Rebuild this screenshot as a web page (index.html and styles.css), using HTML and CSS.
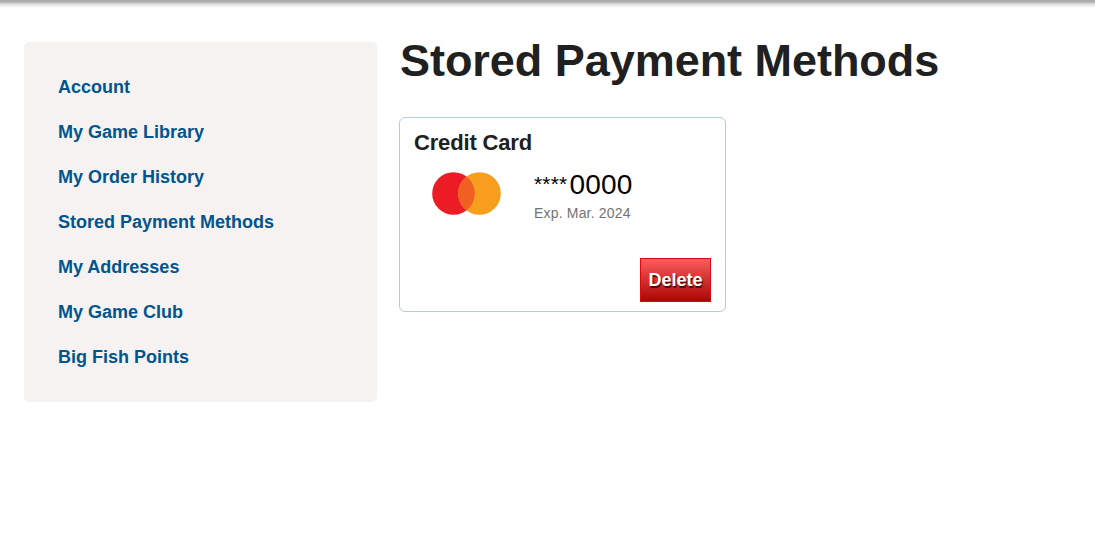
FILE: index.html
```html
<!DOCTYPE html>
<html lang="en">
<head>
    <meta charset="UTF-8">
    <meta name="viewport" content="width=device-width, initial-scale=1.0">
    <title>Stored Payment Methods</title>
    <link rel="stylesheet" href="styles.css">
</head>
<body>
    <div class="top-shadow"></div>
    <div class="container">
        <nav class="sidebar">
            <a href="#">Account</a>
            <a href="#">My Game Library</a>
            <a href="#">My Order History</a>
            <a href="#">Stored Payment Methods</a>
            <a href="#">My Addresses</a>
            <a href="#">My Game Club</a>
            <a href="#">Big Fish Points</a>
        </nav>

        <main class="content">
            <h1>Stored Payment Methods</h1>
            <section class="card">
                <h2>Credit Card</h2>
                <div class="card-details">
                    <svg class="card-logo" width="70" height="44" viewBox="0 0 70 44">
                        <circle cx="21.5" cy="22.5" r="21.3" fill="#eb1c26"/>
                        <circle cx="47.5" cy="22.5" r="21.3" fill="#f79e1f"/>
                        <path d="M34.5 5.6a21.3 21.3 0 0 1 0 33.8a21.3 21.3 0 0 1 0-33.8z" fill="#f16022"/>
                    </svg>
                    <div class="card-info">
                        <div class="card-number"><span class="mask">****</span><span class="digits">0000</span></div>
                        <div class="card-exp">Exp. Mar. 2024</div>
                    </div>
                </div>
                <button type="button" class="delete">Delete</button>
            </section>
        </main>
    </div>
</body>
</html>
```
FILE: styles.css
```css
* {
    margin: 0;
    padding: 0;
    box-sizing: border-box;
}

body {
    background: #fff;
    color: #202020;
    font-family: "Liberation Sans", Arial, sans-serif;
}

.top-shadow {
    height: 8px;
    background: linear-gradient(to bottom, #a8a8a8 0, #b0b0b0 2px, #dcdcdc 4px, #fff 8px);
}

.container {
    display: flex;
    align-items: flex-start;
    gap: 22px;
    padding: 34px 24px 0;
}

.sidebar {
    display: flex;
    flex-direction: column;
    width: 353px;
    height: 360px;
    padding: 23px 34px;
    border-radius: 5px;
    background: #f6f2f2;
}

.sidebar a {
    color: #00558f;
    font-size: 18px;
    font-weight: bold;
    line-height: 45px;
    text-decoration: none;
}

h1 {
    margin-top: -7px;
    padding-left: 1px;
    font-size: 45px;
    line-height: 52px;
    letter-spacing: -0.04px;
    white-space: nowrap;
}

.card {
    display: flex;
    flex-direction: column;
    width: 327px;
    height: 195px;
    margin-top: 30px;
    padding: 12px 14px 9px;
    border: 1px solid #b0cdd8;
    border-radius: 6px;
}

h2 {
    font-size: 22px;
    line-height: 26px;
    letter-spacing: -0.17px;
}

.card-details {
    display: flex;
    gap: 32px;
    padding: 15px 0 0 18px;
}

.card-number {
    display: flex;
    align-items: flex-start;
    gap: 2px;
    height: 34px;
    margin-top: -2px;
    color: #000;
    line-height: 31px;
}

.mask {
    font-size: 21px;
    line-height: 29px;
    letter-spacing: 0.2px;
}

.digits {
    font-size: 28px;
    letter-spacing: 0.2px;
}

.card-exp {
    color: #737373;
    font-size: 14px;
    line-height: 20px;
    letter-spacing: 0.18px;
}

.delete {
    align-self: flex-end;
    width: 71px;
    height: 44px;
    margin-top: auto;
    border: 1px solid #d80a0a;
    background: linear-gradient(to bottom, #fb5c5c, #ac0505);
    color: #fff;
    font-family: inherit;
    font-size: 18px;
    font-weight: bold;
    text-shadow: 1px 2px 1px #500;
    cursor: pointer;
}
```
